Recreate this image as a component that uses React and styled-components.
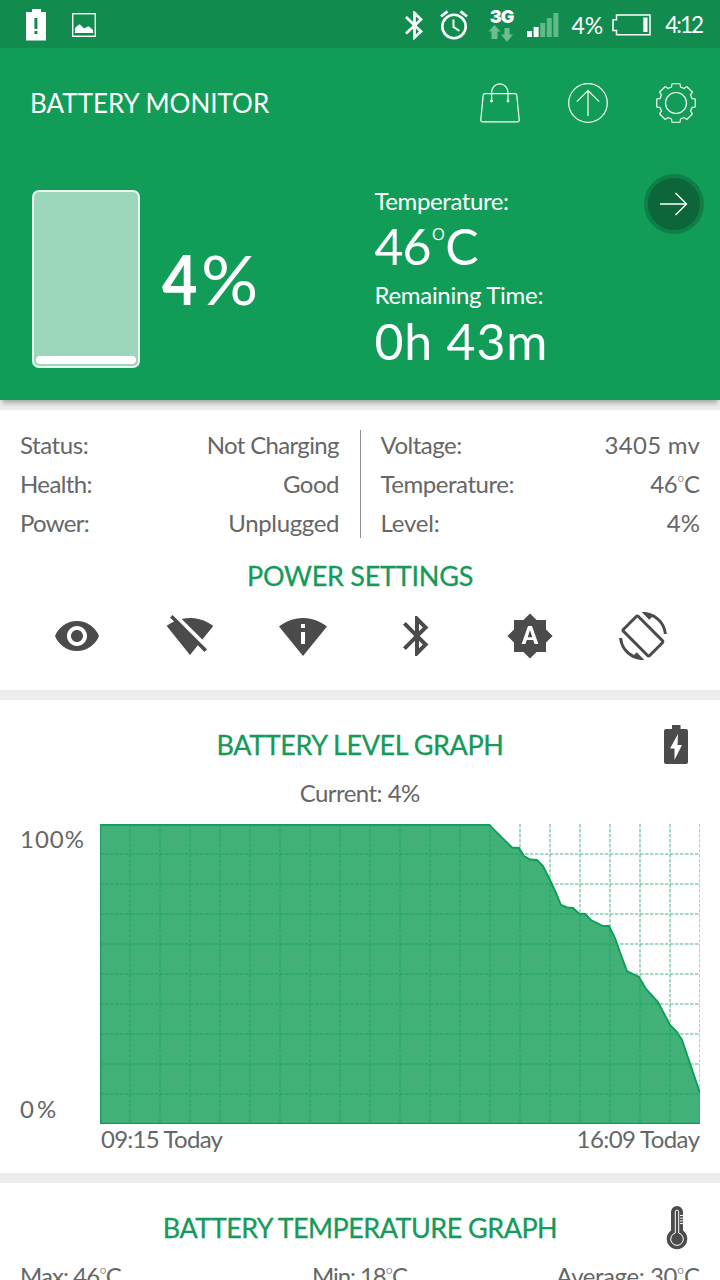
import React from "react";
import styled, { createGlobalStyle } from "styled-components";
import {
  MdVisibility,
  MdPermScanWifi,
  MdBluetooth,
  MdBrightnessAuto,
  MdScreenRotation,
} from "react-icons/md";

const GlobalStyle = createGlobalStyle`
  * { box-sizing: border-box; }
  body {
    margin: 0;
    background: #ededed;
    font-family: Lato, "Liberation Sans", sans-serif;
  }
  svg { display: block; flex: none; }
`;

const Screen = styled.div`
  width: 720px;
  height: 1280px;
  overflow: hidden;
  display: flex;
  flex-direction: column;
  background: #ededed;
  color: #666;
`;

const Text = styled.span`
  display: block;
  white-space: nowrap;
  font-size: ${(p) => p.$size || 24}px;
  line-height: ${(p) => p.$line || 30}px;
  letter-spacing: ${(p) => p.$track || 0}px;
  margin-right: ${(p) => -(p.$track || 0)}px;
`;

const Degree = styled.span`
  font-size: 0.78em;
  font-weight: 300;
  line-height: 0;
  vertical-align: 0.24em;
`;

const StatusBar = styled.div`
  flex: none;
  height: 48px;
  background: #118c4e;
  color: #fff;
  display: flex;
  align-items: center;
  justify-content: space-between;
  padding: 2px 16px 0 26px;
`;

const StatusGroup = styled.div`
  display: flex;
  align-items: center;
  gap: ${(p) => p.$gap}px;
`;

const Network = styled.div`
  width: 26px;
  height: 36px;
  margin: 2px -3px 0 4px;
  display: flex;
  flex-direction: column;
  align-items: center;
`;

const NetworkLabel = styled.span`
  font-family: Inter, sans-serif;
  font-weight: 900;
  font-size: 18px;
  line-height: 17px;
  letter-spacing: -1px;
`;

const Hero = styled.header`
  flex: none;
  height: 352px;
  background: #119d58;
  color: #fff;
  box-shadow: 0 5px 5px -2px rgba(0, 0, 0, 0.3);
  z-index: 1;
`;

const Toolbar = styled.div`
  height: 110px;
  padding: 0 24px 0 30px;
  display: flex;
  align-items: center;
  justify-content: space-between;
`;

const Actions = styled.div`
  display: flex;
  gap: 48px;
`;

const Summary = styled.div`
  display: flex;
  align-items: flex-start;
  padding: 32px 16px 0 31.500px;
`;

const BatteryGauge = styled.div`
  width: 108px;
  height: 178px;
  border: 2px solid #e9f7ef;
  border-radius: 7px;
  background: #9dd7bb;
  padding: 3px 2px 2px;
  display: flex;
  align-items: flex-end;
`;

const GaugeFill = styled.div`
  width: 100%;
  height: ${(p) => p.$level}%;
  min-height: 8px;
  border-radius: 4px;
  background: #fff;
`;

const Percent = styled.div`
  width: 213px;
  margin: 55px 0 0 22px;
  display: flex;
`;

const BigDigit = styled.span`
  font-size: 68px;
  line-height: 68px;
  font-weight: 700;
  transform: scaleX(0.9);
  transform-origin: left;
`;

const BigSign = styled.span`
  font-size: 68px;
  line-height: 68px;
  font-weight: 400;
  transform: scaleX(1.05);
  transform-origin: left;
`;

const Readings = styled.div`
  flex: 1;
  display: flex;
  flex-direction: column;
  margin-top: -2px;
`;

const NextButton = styled.button`
  width: 60px;
  height: 60px;
  margin-top: -16px;
  padding: 0;
  border: 4px solid #0e7f47;
  border-radius: 50%;
  background: #0c6639;
  display: flex;
  align-items: center;
  justify-content: center;
`;

const Card = styled.section`
  flex: none;
  height: ${(p) => p.$height}px;
  margin-top: 10px;
  background: #fff;
`;

const Facts = styled.div`
  display: flex;
  padding: 20px 20px 0;
`;

const FactColumn = styled.div`
  flex: 1;
  height: 108px;
  padding-left: ${(p) => (p.$right ? 20 : 0)}px;
  padding-right: ${(p) => (p.$right ? 0 : 20)}px;
  border-left: ${(p) => (p.$right ? "1px solid #8c8c8c" : "none")};
`;

const FactRow = styled.div`
  display: flex;
  justify-content: space-between;
  height: 39.2px;
`;

const Title = styled.h2`
  margin: 0;
  font-size: 27px;
  font-weight: 400;
  line-height: 36px;
  letter-spacing: ${(p) => p.$track}px;
  text-align: center;
  color: #169a59;
  -webkit-text-stroke: 0.3px #169a59;
`;

const PowerHeading = styled.div`
  padding-top: 20px;
`;

const PowerRow = styled.div`
  display: grid;
  grid-template-columns: repeat(6, 1fr);
  justify-items: center;
  padding: 18px 20px 0;
  color: #4b4b4b;
`;

const CardHead = styled.div`
  display: grid;
  grid-template-columns: 44px 1fr 44px;
  align-items: center;
  justify-items: center;
  height: 69px;
  padding-top: 21px;
  margin: 0 22px;
`;

const Caption = styled.div`
  display: flex;
  justify-content: center;
  height: 55px;
  padding-top: 9px;
`;

const ChartRow = styled.div`
  display: flex;
`;

const YAxis = styled.div`
  width: 100px;
  height: 300px;
  padding-left: 20px;
  display: flex;
  flex-direction: column;
  justify-content: space-between;
`;

const XAxis = styled.div`
  display: flex;
  justify-content: space-between;
  padding: 0 20px 0 101px;
`;

const Extremes = styled.div`
  display: grid;
  grid-template-columns: 1fr auto 1fr;
  padding: 9px 20px 0 20px;

  & > :last-child {
    justify-self: end;
  }
`;

const AlertBattery = () => (
  <svg width="20" height="32" viewBox="0 0 20 32">
    <path fill="#fff" fillRule="evenodd" d="M6 0h9v3h5v28.500H0V3h6zM8.400 9v11h3V9zM8.400 22v3h3v-3z" />
  </svg>
);

const PictureIcon = () => (
  <svg width="24" height="24" viewBox="0 0 24 24">
    <rect x=".7" y=".7" width="22.6" height="22.6" fill="none" stroke="#fff" strokeWidth="1.4" />
    <path fill="#fff" d="M3 20v-5l4-3.500h1l4 4 4-2h1l4 3.500V20z" />
  </svg>
);

const StatusBluetooth = () => (
  <svg width="19" height="29" viewBox="0 0 19 29">
    <path d="M1 6l15 14.500L9.500 26.500V2L16 8.500 1 22.500" fill="none" stroke="#fff" strokeWidth="2.700" />
  </svg>
);

const AlarmIcon = () => (
  <svg width="28" height="30" viewBox="0 0 28 30" fill="none" stroke="#fff">
    <circle cx="14" cy="16.500" r="11.700" strokeWidth="2.600" />
    <path d="M13.500 9.500v7.500l6 4" strokeWidth="2" />
    <path d="M1 6.500L7.500 1.300M20.500 1.300L27 6.500" strokeWidth="2.800" />
  </svg>
);

const DataArrows = () => (
  <svg width="26" height="18" viewBox="0 0 26 18" fill="#6cbd92">
    <path d="M6.500 0l6 6.500H9.500V14h-6V6.500H.5z" />
    <path d="M16.500 3h5v6.500H25L19 17l-6-7.500h3.500z" />
  </svg>
);

const bars = [6, 10, 14, 19, 24];
const SignalIcon = () => (
  <svg width="32" height="24" viewBox="0 0 32 24">
    {bars.map((h, i) => (
      <rect key={h} x={i * 6.6} y={24 - h} width="5" height={h} fill={i < 2 ? "#fff" : "#62b98a"} />
    ))}
  </svg>
);

const StatusBattery = () => (
  <svg width="39" height="22" viewBox="0 0 39 22">
    <path d="M4.500 1H38v19.800H4.500v-4.300H1V5.800h3.500z" fill="none" stroke="#fff" strokeWidth="1.500" />
    <rect x="31.300" y="3.500" width="4.200" height="14.500" fill="#fff" />
  </svg>
);

const BagIcon = () => (
  <svg width="40" height="40" viewBox="0 0 40 40" fill="none" stroke="#fff" strokeWidth="1.200">
    <path d="M5 10.700h30q1.600 0 1.800 1.600l2.400 24.500q.1 2-1.800 2H2.600q-1.900 0-1.800-2l2.400-24.500q.2-1.600 1.800-1.600z" />
    <path d="M11.600 17.500V9.500a8.200 8.600 0 0 1 16.400 0v8" />
    <circle cx="11.600" cy="18" r=".8" fill="#fff" />
    <circle cx="28" cy="18" r=".8" fill="#fff" />
  </svg>
);

const UploadIcon = () => (
  <svg width="40" height="40" viewBox="0 0 40 40" fill="none" stroke="#fff" strokeWidth="1.200">
    <circle cx="20" cy="20" r="19.300" />
    <path d="M20 33V7.500M8.800 18.600L20 7.500l11.200 11.100" />
  </svg>
);

const gearPath = (() => {
  const points = [];
  const steps = [
    [-15.5, 16.6],
    [-13, 19],
    [-11, 19.6],
    [11, 19.6],
    [13, 19],
    [15.5, 16.6],
  ];
  for (let k = 0; k < 8; k += 1) {
    steps.forEach(([a, r]) => {
      const t = ((k * 45 + a) * Math.PI) / 180;
      points.push(`${(20 + r * Math.sin(t)).toFixed(2)} ${(20 - r * Math.cos(t)).toFixed(2)}`);
    });
  }
  return `M${points.join("L")}Z`;
})();

const GearIcon = () => (
  <svg width="40" height="40" viewBox="0 0 40 40" fill="none" stroke="#fff" strokeWidth="1.200" strokeLinejoin="round">
    <path d={gearPath} />
    <circle cx="20" cy="20" r="10.500" />
  </svg>
);

const ArrowIcon = () => (
  <svg width="28" height="24" viewBox="0 0 28 24" fill="none" stroke="#fff" strokeWidth="1.400">
    <path d="M0 12h26.500M15.500 1l11 11-11 11" />
  </svg>
);

const WifiOffIcon = () => (
  <svg width="48" height="48" viewBox="0 0 24 24" fill="currentColor">
    <path d="M23.640 7c-.45-.34-4.930-4-11.640-4-1.500 0-2.890.19-4.150.48L18.180 13.800 23.640 7zm-6.600 8.220L3.270 1.440 2 2.720l2.050 2.060C1.910 5.760.59 6.820.36 7l11.630 14.490.01.01.01-.01 3.900-4.860 3.320 3.320 1.270-1.270-3.460-3.460z" />
  </svg>
);

const ChargeIcon = () => (
  <svg width="24" height="40" viewBox="0 0 24 40">
    <path
      fill="#4b4b4b"
      fillRule="evenodd"
      d="M8 0h8.500v4H22q2 0 2 2v31q0 2-2 2H2q-2 0-2-2V6q0-2 2-2h6zM14 9L6 23.500h4.500v11.500L18 20h-4.500z"
    />
  </svg>
);

const ThermometerIcon = () => (
  <svg width="24" height="44" viewBox="-2 0 24 44">
    <path fill="#4b4b4b" d="M5 6a6 6 0 0 1 12 0v18.500a10.300 10.300 0 1 1-12 0z" />
    <path d="M9.300 27V5.800a1.700 1.700 0 0 1 3.400 0V27a6.300 6.300 0 1 1-3.400 0z" fill="none" stroke="#fff" strokeWidth="1" />
    <path d="M14 9.500h3M14 12.200h3M14 14.900h3M14 17.600h3" stroke="#fff" strokeWidth="1" />
  </svg>
);

const levels = [
  [0, 0.7], [389, 0.7], [412, 23.5], [419, 24], [424, 32], [430, 35.5], [437, 36], [443, 42],
  [450, 56], [456, 69], [461, 81], [467, 83.5], [473, 84], [479, 89.5], [485, 90], [491, 96],
  [503, 102], [509, 102], [515, 114], [521, 131], [527, 147], [539, 153], [546, 165], [558, 178],
  [570, 201], [577, 208], [582, 216], [600, 269],
];

const LevelChart = () => {
  const line = levels.map(([x, y]) => `${x},${y}`).join(" ");
  const columns = Array.from({ length: 20 }, (_, i) => (i + 1) * 30);
  const rows = Array.from({ length: 9 }, (_, i) => (i + 1) * 30);
  return (
    <svg width="600" height="300" viewBox="0 0 600 300">
      <g stroke="#119d58" strokeOpacity="0.5" strokeWidth="1.500" strokeDasharray="3.500 1.500">
        {columns.map((x) => <path key={x} d={`M${x} 0V300`} />)}
        {rows.map((y) => <path key={y} d={`M0 ${y}H600`} />)}
      </g>
      <polygon points={`0,300 ${line} 600,300`} fill="#119d58" fillOpacity="0.8" />
      <polyline points={`0.5,299.400 ${line}`} fill="none" stroke="#119d58" strokeWidth="1.900" />
      <path d="M0 299.400H600" stroke="#119d58" strokeWidth="1.300" />
    </svg>
  );
};

const Celsius = ({ value }) => (
  <>
    {value}
    <Degree>º</Degree>C
  </>
);

const leftFacts = [
  { label: "Status:", labelTrack: -0.43, value: "Not Charging", track: -0.65 },
  { label: "Health:", labelTrack: -0.6, value: "Good", track: -0.5 },
  { label: "Power:", labelTrack: -0.7, value: "Unplugged", track: -0.35 },
];
const rightFacts = [
  { label: "Voltage:", labelTrack: -0.5, value: "3405 mv", track: 0.3 },
  { label: "Temperature:", labelTrack: -0.45, value: <Celsius value="46" />, track: -0.6 },
  { label: "Level:", labelTrack: -0.2, value: "4%", track: 0 },
];

const FactList = ({ facts, right }) => (
  <FactColumn $right={right}>
    {facts.map(({ label, labelTrack, value, track }) => (
      <FactRow key={label}>
        <Text $track={labelTrack}>{label}</Text>
        <Text $track={track}>{value}</Text>
      </FactRow>
    ))}
  </FactColumn>
);

export default function App() {
  return (
    <>
      <GlobalStyle />
      <Screen>
        <StatusBar>
          <StatusGroup $gap={26}>
            <AlertBattery />
            <PictureIcon />
          </StatusGroup>
          <StatusGroup $gap={16}>
            <StatusBluetooth />
            <AlarmIcon />
            <Network>
              <NetworkLabel>3G</NetworkLabel>
              <DataArrows />
            </Network>
            <StatusGroup $gap={9}>
              <StatusGroup $gap={12}>
                <SignalIcon />
                <Text $size={23}>4%</Text>
              </StatusGroup>
              <StatusGroup $gap={14}>
                <StatusBattery />
                <Text $size={22.5} $track={-2}>4:12</Text>
              </StatusGroup>
            </StatusGroup>
          </StatusGroup>
        </StatusBar>

        <Hero>
          <Toolbar>
            <Text $size={26}>BATTERY MONITOR</Text>
            <Actions>
              <BagIcon />
              <UploadIcon />
              <GearIcon />
            </Actions>
          </Toolbar>
          <Summary>
            <BatteryGauge>
              <GaugeFill $level={4} />
            </BatteryGauge>
            <Percent>
              <BigDigit>4</BigDigit>
              <BigSign>%</BigSign>
            </Percent>
            <Readings>
              <Text $line={26} $track={-0.4}>Temperature:</Text>
              <Text $size={50} $line={64} $track={-1}><Celsius value="46" /></Text>
              <Text $line={34} $track={-0.3}>Remaining Time:</Text>
              <Text $size={50} $line={58} $track={0.8}>0h 43m</Text>
            </Readings>
            <NextButton>
              <ArrowIcon />
            </NextButton>
          </Summary>
        </Hero>

        <Card $height={280}>
          <Facts>
            <FactList facts={leftFacts} />
            <FactList facts={rightFacts} right />
          </Facts>
          <PowerHeading>
            <Title $track={-0.25}>POWER SETTINGS</Title>
          </PowerHeading>
          <PowerRow>
            <MdVisibility size={48} />
            <WifiOffIcon />
            <MdPermScanWifi size={48} />
            <MdBluetooth size={48} />
            <MdBrightnessAuto size={48} />
            <MdScreenRotation size={48} />
          </PowerRow>
        </Card>

        <Card $height={473}>
          <CardHead>
            <span />
            <Title $track={-0.43}>BATTERY LEVEL GRAPH</Title>
            <ChargeIcon />
          </CardHead>
          <Caption>
            <Text $track={-0.55}>Current: 4%</Text>
          </Caption>
          <ChartRow>
            <YAxis>
              <Text $track={1}>100%</Text>
              <Text $track={3}>0%</Text>
            </YAxis>
            <LevelChart />
          </ChartRow>
          <XAxis>
            <Text $track={-0.75}>09:15 Today</Text>
            <Text $track={-0.6}>16:09 Today</Text>
          </XAxis>
        </Card>

        <Card $height={200}>
          <CardHead>
            <span />
            <Title $track={-0.54}>BATTERY TEMPERATURE GRAPH</Title>
            <ThermometerIcon />
          </CardHead>
          <Extremes>
            <Text $track={-0.95}>Max: <Celsius value="46" /></Text>
            <Text $track={-1.1}>Min: <Celsius value="18" /></Text>
            <Text $track={-0.45}>Average: <Celsius value="30" /></Text>
          </Extremes>
        </Card>
      </Screen>
    </>
  );
}
